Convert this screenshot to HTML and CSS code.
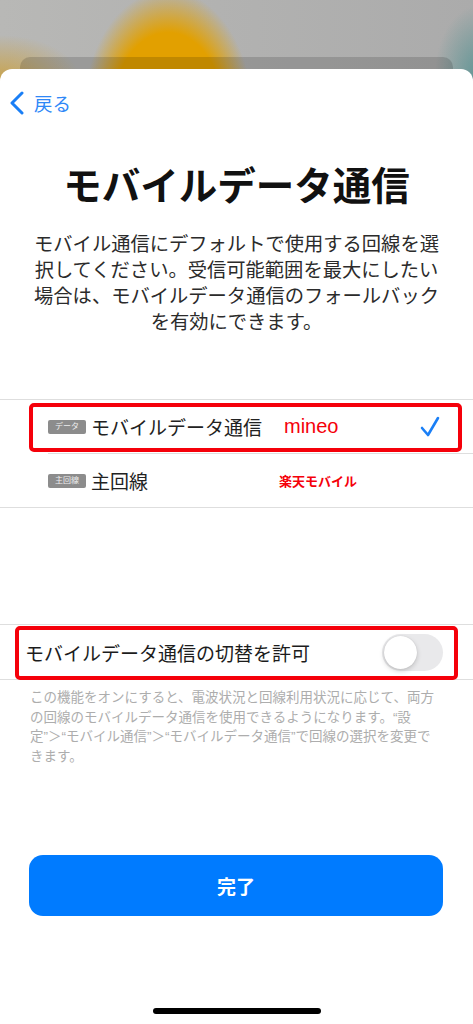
FILE: index.html
```html
<!DOCTYPE html>
<html lang="ja">
<head>
    <meta charset="UTF-8">
    <title>モバイルデータ通信</title>
    <link rel="stylesheet" href="styles.css">
</head>
<body>
    <div class="backdrop">
        <div class="behind-card"></div>
    </div>

    <div class="sheet">
        <div class="nav">
            <svg class="chevron" width="16" height="24" viewBox="0 0 16 24">
                <path d="M13 2 L3 12 L13 22" fill="none" stroke="#1a7ff6" stroke-width="3" stroke-linecap="round" stroke-linejoin="round"/>
            </svg>
            <span class="back-label">戻る</span>
        </div>

        <h1 class="title">モバイルデータ通信</h1>
        <p class="lead">モバイル通信にデフォルトで使用する回線を選<br>択してください。受信可能範囲を最大にしたい<br>場合は、モバイルデータ通信のフォールバック<br>を有効にできます。</p>

        <div class="group lines">
            <div class="row marked">
                <span class="badge">データ</span>
                <span class="name">モバイルデータ通信</span>
                <span class="note note-big">mineo</span>
                <svg class="check" width="20" height="24" viewBox="0 0 20 24">
                    <path d="M2 13 L8 20 L18 3" fill="none" stroke="#1a7ff6" stroke-width="2.6" stroke-linecap="round" stroke-linejoin="round"/>
                </svg>
            </div>
            <div class="row">
                <span class="badge">主回線</span>
                <span class="name">主回線</span>
                <span class="note note-small">楽天モバイル</span>
            </div>
        </div>

        <div class="group switch-group">
            <div class="row switch-row marked-wide">
                <span class="switch-label">モバイルデータ通信の切替を許可</span>
                <span class="toggle"><span class="knob"></span></span>
            </div>
        </div>
        <p class="footnote">この機能をオンにすると、電波状況と回線利用状況に応じて、両方<br>の回線のモバイルデータ通信を使用できるようになります。“設<br>定”＞“モバイル通信”＞“モバイルデータ通信”で回線の選択を変更で<br>きます。</p>

        <button class="done">完了</button>

        <div class="home-bar"></div>
    </div>
</body>
</html>
```

FILE: styles.css
```css
* {
    margin: 0;
    padding: 0;
    box-sizing: border-box;
}

body {
    width: 473px;
    height: 1024px;
    overflow: hidden;
    font-family: 'Liberation Sans', 'Noto Sans CJK JP', sans-serif;
    color: #222;
    background:
        radial-gradient(ellipse 85px 125px at 168px 115px, #e2a000 0%, #e2a000 66%, rgba(226, 160, 0, 0) 100%),
        radial-gradient(ellipse 80px 45px at 0 80px, rgba(205, 158, 50, 0.8), rgba(205, 158, 50, 0)),
        radial-gradient(ellipse 45px 70px at 480px 75px, #5f9595, rgba(95, 149, 149, 0)),
        linear-gradient(to right, #b8b8b6, #ababab);
}

.backdrop {
    padding-top: 57px;
}

.behind-card {
    height: 12px;
    margin: 0 20px;
    border-radius: 10px 10px 0 0;
    background-color: rgba(0, 0, 0, 0.15);
}

.sheet {
    height: 955px;
    background-color: #fff;
    border-radius: 12px 12px 0 0;
    display: flex;
    flex-direction: column;
}

.nav {
    display: flex;
    align-items: center;
    gap: 9px;
    padding: 22px 0 0 9px;
    height: 46px;
}

.back-label {
    font-size: 18.5px;
    color: #2f88f7;
}

.title {
    margin-top: 50px;
    font-size: 38.5px;
    line-height: 44px;
    font-weight: bold;
    text-align: center;
    color: #111;
}

.lead {
    margin-top: 23px;
    font-size: 19.3px;
    line-height: 26px;
    text-align: center;
    color: #2b2b2b;
}

.group {
    border-top: 1px solid #dedede;
    border-bottom: 1px solid #dedede;
}

.lines {
    margin-top: 63px;
}

.row {
    position: relative;
    display: flex;
    align-items: center;
    height: 53px;
    padding: 0 35px 0 48px;
}

.lines .row + .row::before {
    content: '';
    position: absolute;
    top: -1px;
    left: 48px;
    right: 0;
    border-top: 1px solid #dedede;
}

.lines .row + .row {
    margin-top: 1px;
}

.marked::after,
.marked-wide::after {
    content: '';
    position: absolute;
    top: 3px;
    bottom: 1px;
    left: 29px;
    right: 11px;
    border: 4px solid #f5000a;
    border-radius: 5px;
}

.marked-wide::after {
    top: 1px;
    bottom: -1px;
    left: 15px;
    right: 15px;
}

.badge {
    width: 38px;
    height: 14px;
    border-radius: 2px;
    background-color: #8c8c8c;
    color: #eee;
    font-size: 8px;
    line-height: 14px;
    text-align: center;
    margin-right: 5px;
}

.name {
    width: 188px;
    font-size: 19px;
}

.note {
    color: #f5000a;
}

.note-big {
    font-size: 20px;
    margin-left: 5px;
}

.note-small {
    font-size: 13px;
    font-weight: bold;
}

.check {
    margin-left: auto;
    margin-right: -2px;
}

.switch-group {
    margin-top: 116px;
}

.switch-row {
    height: 54px;
    padding: 0 30px 0 25px;
    justify-content: space-between;
}

.switch-label {
    font-size: 19px;
    color: #1c1c1c;
}

.toggle {
    display: flex;
    align-items: center;
    width: 61px;
    height: 37px;
    padding: 2px;
    border-radius: 19px;
    background-color: #e9e9eb;
}

.knob {
    width: 33px;
    height: 33px;
    border-radius: 50%;
    background-color: #fff;
    box-shadow: 0 2px 5px rgba(0, 0, 0, 0.18), 0 0 1px rgba(0, 0, 0, 0.15);
}

.footnote {
    margin-top: 8px;
    padding: 0 30px;
    font-size: 13.5px;
    line-height: 19.5px;
    color: #adadad;
}

.done {
    margin: 89px 30px 0 29px;
    height: 61px;
    border: none;
    border-radius: 14px;
    background-color: #007bff;
    color: #fff;
    font-family: 'Liberation Sans', 'Noto Sans CJK JP', sans-serif;
    font-size: 19px;
    font-weight: bold;
}

.home-bar {
    width: 168px;
    height: 6px;
    margin: 92px auto 0;
    border-radius: 3px;
    background-color: #000;
}
```
